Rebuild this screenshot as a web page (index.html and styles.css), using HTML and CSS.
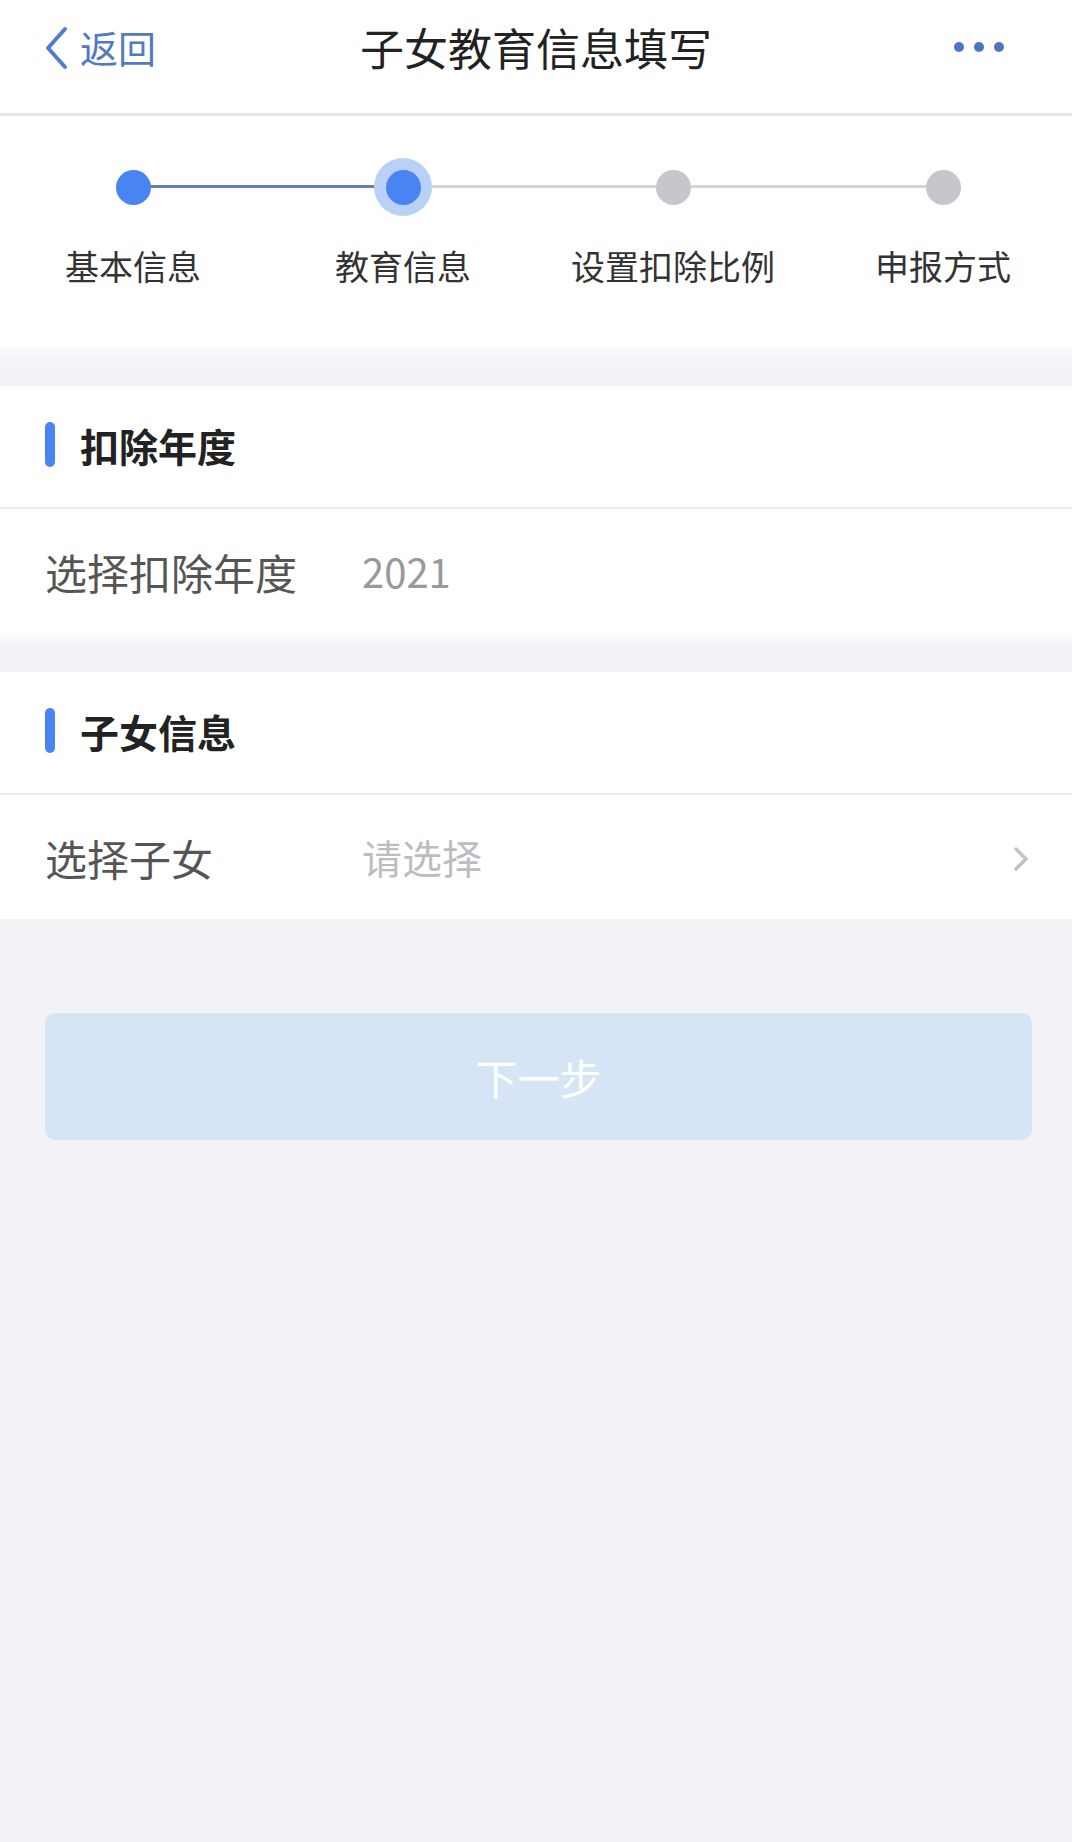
FILE: index.html
```html
<!DOCTYPE html>
<html>

<head>
  <meta charset="utf-8">
  <link rel="stylesheet" href="styles.css">
</head>

<body>
  <div class="nav">
    <div class="back">
      <svg class="back-icon" width="26" height="44" viewBox="0 0 26 44">
        <path d="M22 3 L5 22 L22 41" fill="none" stroke="#4f7ccc" stroke-width="4" stroke-linecap="round" stroke-linejoin="round"/>
      </svg>
      <span>返回</span>
    </div>
    <div class="title">子女教育信息填写</div>
    <div class="more">
      <i></i><i></i><i></i>
    </div>
  </div>

  <div class="steps">
    <div class="step done">
      <div class="dot-wrap"><span class="dot"></span></div>
      <div class="step-name">基本信息</div>
    </div>
    <div class="step current">
      <div class="dot-wrap"><span class="dot"></span></div>
      <div class="step-name">教育信息</div>
    </div>
    <div class="step">
      <div class="dot-wrap"><span class="dot"></span></div>
      <div class="step-name">设置扣除比例</div>
    </div>
    <div class="step">
      <div class="dot-wrap"><span class="dot"></span></div>
      <div class="step-name">申报方式</div>
    </div>
  </div>

  <div class="gap"></div>

  <div class="card">
    <div class="card-head"><span class="bar"></span>扣除年度</div>
    <div class="row">
      <span class="row-label">选择扣除年度</span>
      <span class="row-value">2021</span>
    </div>
  </div>

  <div class="gap"></div>

  <div class="card">
    <div class="card-head"><span class="bar"></span>子女信息</div>
    <div class="row">
      <span class="row-label">选择子女</span>
      <span class="row-value placeholder">请选择</span>
      <svg class="arrow" width="18" height="26" viewBox="0 0 18 26">
        <path d="M4 3 L14 13 L4 23" fill="none" stroke="#c2c2c6" stroke-width="3.5" stroke-linecap="round" stroke-linejoin="round"/>
      </svg>
    </div>
  </div>

  <button class="next" disabled>下一步</button>
</body>
</html>
```

FILE: styles.css
```css
body {
  margin: 0;
  padding: 0;
  background-color: #f3f2f7;
  font-family: "Noto Sans CJK SC", "Noto Sans", sans-serif;
  min-height: 1842px;
}

.nav {
  height: 116px;
  box-sizing: border-box;
  background-color: #fff;
  border-bottom: 3px solid #e4e4e6;
  display: grid;
  grid-template-columns: 1fr auto 1fr;
  align-items: center;
  padding: 0 43px 19px 43px;
}

.back {
  display: flex;
  align-items: center;
  color: #5479c2;
  font-size: 38px;
  line-height: 44px;
}

.back-icon {
  margin-right: 11px;
  margin-top: 2px;
}

.title {
  font-size: 44px;
  color: #222;
}

.more {
  display: flex;
  justify-content: flex-end;
  gap: 10px;
  margin-right: 25px;
}

.more i {
  width: 10px;
  height: 10px;
  border-radius: 50%;
  background-color: #4c74c6;
}

.steps {
  background-color: #fff;
  display: grid;
  grid-template-columns: repeat(4, 270px);
  padding: 42px 0 61px;
  margin-left: -2px;
  overflow: hidden;
}

.step {
  display: flex;
  flex-direction: column;
  align-items: center;
  position: relative;
}

.step + .step::before {
  content: "";
  position: absolute;
  top: 27px;
  left: -50%;
  width: 100%;
  height: 3px;
  background-color: #d4d4d8;
}

.step.done + .step::before {
  background-color: #6481a9;
}

.dot-wrap {
  width: 58px;
  height: 58px;
  border-radius: 50%;
  display: flex;
  align-items: center;
  justify-content: center;
  position: relative;
  z-index: 1;
}

.dot {
  width: 35px;
  height: 35px;
  border-radius: 50%;
  background-color: #c6c6cc;
}

.done .dot,
.current .dot {
  background-color: #4a84f2;
}

.current .dot-wrap {
  background-color: #b9d1f7;
}

.step-name {
  margin-top: 30px;
  font-size: 34px;
  line-height: 40px;
  color: #333;
}

.gap {
  height: 39px;
  background: linear-gradient(#fbfbfd, #f3f2f7 40%);
}

.card {
  background-color: #fff;
}

.card-head {
  height: 123px;
  box-sizing: border-box;
  display: flex;
  align-items: center;
  padding-left: 45px;
  padding-bottom: 4px;
  border-bottom: 2px solid #ebebee;
  font-size: 39px;
  font-weight: bold;
  color: #222;
}

.bar {
  width: 10px;
  height: 45px;
  border-radius: 5px;
  background-color: #4a84f2;
  margin-right: 25px;
}

.row {
  height: 124px;
  display: flex;
  align-items: center;
  padding: 0 42px 0 45px;
}

.row-label {
  width: 317px;
  font-size: 42px;
  color: #555;
}

.row-value {
  flex: 1;
  font-size: 40px;
  color: #999;
}

.row-value.placeholder {
  color: #bdbdc1;
}

.arrow {
  margin-top: 4px;
}

.next {
  display: block;
  width: 987px;
  height: 127px;
  margin: 94px 40px 0 45px;
  border: none;
  border-radius: 10px;
  background-color: #d5e5f5;
  color: #fff;
  font-size: 42px;
  font-family: "Noto Sans CJK SC", "Noto Sans", sans-serif;
}
```
